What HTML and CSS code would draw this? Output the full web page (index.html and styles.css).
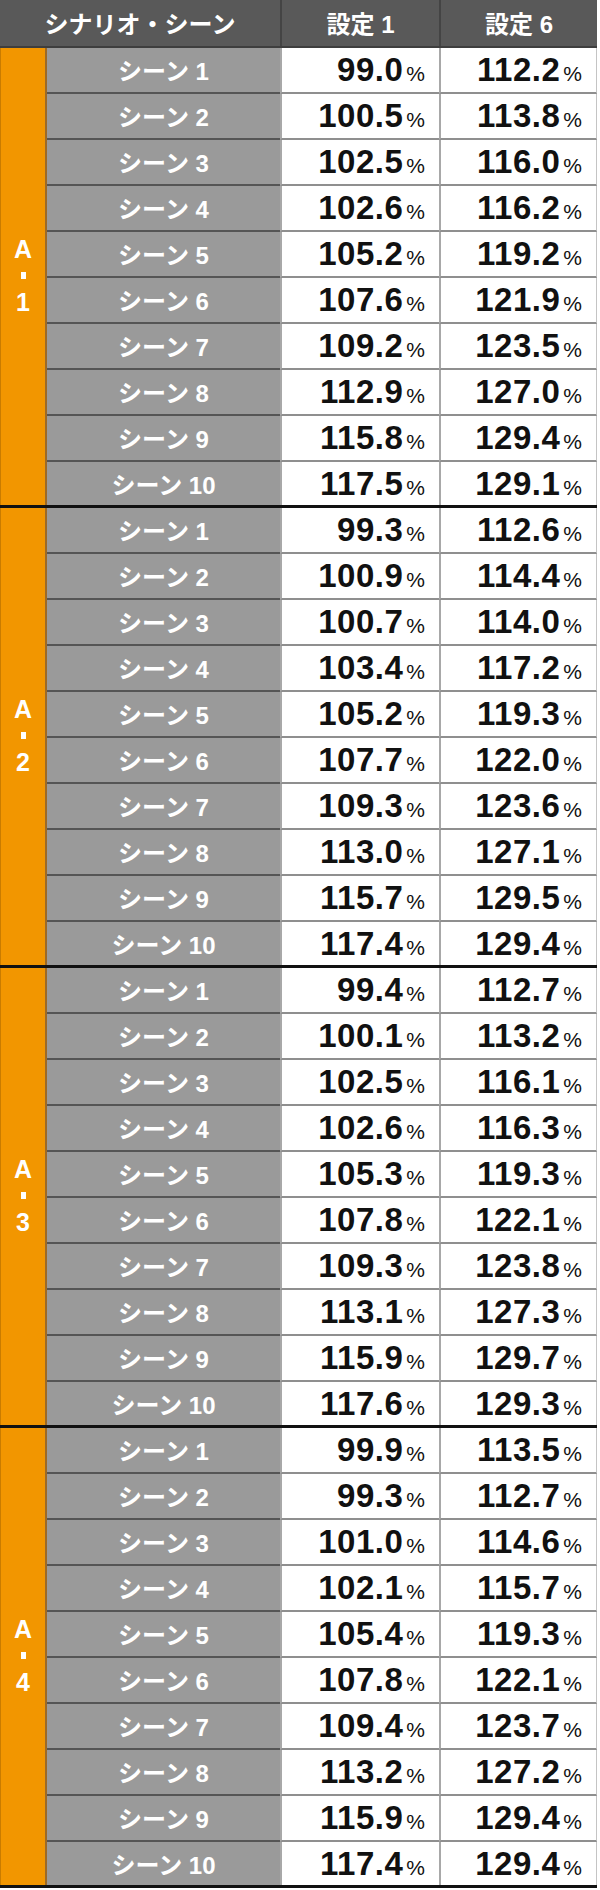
FILE: index.html
```html
<!DOCTYPE html>
<html lang="ja">
<head>
<meta charset="utf-8">
<title>シナリオ・シーン別 機械割</title>
<link rel="stylesheet" href="styles.css">
</head>
<body>
<div class="table">
  <div class="head">
    <div class="h-scene">シナリオ・シーン</div>
    <div class="h-val">設定 1</div>
    <div class="h-val">設定 6</div>
  </div>

  <div class="group">
    <div class="label"><span>A</span><span class="dash"></span><span>1</span></div>
    <div class="rows">
      <div class="row"><div class="scene">シーン 1</div><div class="val">99.0<span class="pct">%</span></div><div class="val">112.2<span class="pct">%</span></div></div>
      <div class="row"><div class="scene">シーン 2</div><div class="val">100.5<span class="pct">%</span></div><div class="val">113.8<span class="pct">%</span></div></div>
      <div class="row"><div class="scene">シーン 3</div><div class="val">102.5<span class="pct">%</span></div><div class="val">116.0<span class="pct">%</span></div></div>
      <div class="row"><div class="scene">シーン 4</div><div class="val">102.6<span class="pct">%</span></div><div class="val">116.2<span class="pct">%</span></div></div>
      <div class="row"><div class="scene">シーン 5</div><div class="val">105.2<span class="pct">%</span></div><div class="val">119.2<span class="pct">%</span></div></div>
      <div class="row"><div class="scene">シーン 6</div><div class="val">107.6<span class="pct">%</span></div><div class="val">121.9<span class="pct">%</span></div></div>
      <div class="row"><div class="scene">シーン 7</div><div class="val">109.2<span class="pct">%</span></div><div class="val">123.5<span class="pct">%</span></div></div>
      <div class="row"><div class="scene">シーン 8</div><div class="val">112.9<span class="pct">%</span></div><div class="val">127.0<span class="pct">%</span></div></div>
      <div class="row"><div class="scene">シーン 9</div><div class="val">115.8<span class="pct">%</span></div><div class="val">129.4<span class="pct">%</span></div></div>
      <div class="row"><div class="scene">シーン 10</div><div class="val">117.5<span class="pct">%</span></div><div class="val">129.1<span class="pct">%</span></div></div>
    </div>
  </div>

  <div class="group">
    <div class="label"><span>A</span><span class="dash"></span><span>2</span></div>
    <div class="rows">
      <div class="row"><div class="scene">シーン 1</div><div class="val">99.3<span class="pct">%</span></div><div class="val">112.6<span class="pct">%</span></div></div>
      <div class="row"><div class="scene">シーン 2</div><div class="val">100.9<span class="pct">%</span></div><div class="val">114.4<span class="pct">%</span></div></div>
      <div class="row"><div class="scene">シーン 3</div><div class="val">100.7<span class="pct">%</span></div><div class="val">114.0<span class="pct">%</span></div></div>
      <div class="row"><div class="scene">シーン 4</div><div class="val">103.4<span class="pct">%</span></div><div class="val">117.2<span class="pct">%</span></div></div>
      <div class="row"><div class="scene">シーン 5</div><div class="val">105.2<span class="pct">%</span></div><div class="val">119.3<span class="pct">%</span></div></div>
      <div class="row"><div class="scene">シーン 6</div><div class="val">107.7<span class="pct">%</span></div><div class="val">122.0<span class="pct">%</span></div></div>
      <div class="row"><div class="scene">シーン 7</div><div class="val">109.3<span class="pct">%</span></div><div class="val">123.6<span class="pct">%</span></div></div>
      <div class="row"><div class="scene">シーン 8</div><div class="val">113.0<span class="pct">%</span></div><div class="val">127.1<span class="pct">%</span></div></div>
      <div class="row"><div class="scene">シーン 9</div><div class="val">115.7<span class="pct">%</span></div><div class="val">129.5<span class="pct">%</span></div></div>
      <div class="row"><div class="scene">シーン 10</div><div class="val">117.4<span class="pct">%</span></div><div class="val">129.4<span class="pct">%</span></div></div>
    </div>
  </div>

  <div class="group">
    <div class="label"><span>A</span><span class="dash"></span><span>3</span></div>
    <div class="rows">
      <div class="row"><div class="scene">シーン 1</div><div class="val">99.4<span class="pct">%</span></div><div class="val">112.7<span class="pct">%</span></div></div>
      <div class="row"><div class="scene">シーン 2</div><div class="val">100.1<span class="pct">%</span></div><div class="val">113.2<span class="pct">%</span></div></div>
      <div class="row"><div class="scene">シーン 3</div><div class="val">102.5<span class="pct">%</span></div><div class="val">116.1<span class="pct">%</span></div></div>
      <div class="row"><div class="scene">シーン 4</div><div class="val">102.6<span class="pct">%</span></div><div class="val">116.3<span class="pct">%</span></div></div>
      <div class="row"><div class="scene">シーン 5</div><div class="val">105.3<span class="pct">%</span></div><div class="val">119.3<span class="pct">%</span></div></div>
      <div class="row"><div class="scene">シーン 6</div><div class="val">107.8<span class="pct">%</span></div><div class="val">122.1<span class="pct">%</span></div></div>
      <div class="row"><div class="scene">シーン 7</div><div class="val">109.3<span class="pct">%</span></div><div class="val">123.8<span class="pct">%</span></div></div>
      <div class="row"><div class="scene">シーン 8</div><div class="val">113.1<span class="pct">%</span></div><div class="val">127.3<span class="pct">%</span></div></div>
      <div class="row"><div class="scene">シーン 9</div><div class="val">115.9<span class="pct">%</span></div><div class="val">129.7<span class="pct">%</span></div></div>
      <div class="row"><div class="scene">シーン 10</div><div class="val">117.6<span class="pct">%</span></div><div class="val">129.3<span class="pct">%</span></div></div>
    </div>
  </div>

  <div class="group">
    <div class="label"><span>A</span><span class="dash"></span><span>4</span></div>
    <div class="rows">
      <div class="row"><div class="scene">シーン 1</div><div class="val">99.9<span class="pct">%</span></div><div class="val">113.5<span class="pct">%</span></div></div>
      <div class="row"><div class="scene">シーン 2</div><div class="val">99.3<span class="pct">%</span></div><div class="val">112.7<span class="pct">%</span></div></div>
      <div class="row"><div class="scene">シーン 3</div><div class="val">101.0<span class="pct">%</span></div><div class="val">114.6<span class="pct">%</span></div></div>
      <div class="row"><div class="scene">シーン 4</div><div class="val">102.1<span class="pct">%</span></div><div class="val">115.7<span class="pct">%</span></div></div>
      <div class="row"><div class="scene">シーン 5</div><div class="val">105.4<span class="pct">%</span></div><div class="val">119.3<span class="pct">%</span></div></div>
      <div class="row"><div class="scene">シーン 6</div><div class="val">107.8<span class="pct">%</span></div><div class="val">122.1<span class="pct">%</span></div></div>
      <div class="row"><div class="scene">シーン 7</div><div class="val">109.4<span class="pct">%</span></div><div class="val">123.7<span class="pct">%</span></div></div>
      <div class="row"><div class="scene">シーン 8</div><div class="val">113.2<span class="pct">%</span></div><div class="val">127.2<span class="pct">%</span></div></div>
      <div class="row"><div class="scene">シーン 9</div><div class="val">115.9<span class="pct">%</span></div><div class="val">129.4<span class="pct">%</span></div></div>
      <div class="row"><div class="scene">シーン 10</div><div class="val">117.4<span class="pct">%</span></div><div class="val">129.4<span class="pct">%</span></div></div>
    </div>
  </div>
</div>
</body>
</html>
```

FILE: styles.css
```css
* { box-sizing: border-box; }

html, body {
  margin: 0;
  padding: 0;
  background: #ffffff;
}

body {
  font-family: "Liberation Sans", "Noto Sans CJK JP", sans-serif;
  font-weight: bold;
}

.table {
  width: 597px;
}

.head {
  display: grid;
  grid-template-columns: 280px 159px 158px;
  height: 48px;
  background: #595959;
  border-bottom: 2px solid #3e3e3e;
  color: #ffffff;
  font-size: 24px;
}

.h-scene,
.h-val {
  display: flex;
  align-items: center;
  justify-content: center;
  padding-bottom: 2px;
}

.h-val {
  border-left: 2px solid #444444;
}

.group {
  display: flex;
  border-bottom: 3px solid #111111;
}

.label {
  width: 47px;
  flex: none;
  background: #f29600;
  border-left: 1px solid #c97c00;
  border-right: 2px solid #9b6a28;
  display: flex;
  flex-direction: column;
  align-items: center;
  justify-content: center;
  color: #ffffff;
  font-family: "Liberation Sans", sans-serif;
  font-size: 25px;
  line-height: 26px;
  padding-bottom: 2px;
}

.dash {
  width: 5px;
  height: 7px;
  background: #ffffff;
  margin: 10px 0 10px;
}

.rows {
  flex: 1;
  display: flex;
  flex-direction: column;
}

.row {
  display: grid;
  grid-template-columns: 233px 159px 158px;
  height: 46px;
}

.row:last-child {
  height: 43px;
}

.scene {
  background: #9a9a9a;
  color: #ffffff;
  font-size: 24px;
  display: flex;
  align-items: center;
  justify-content: center;
  border-bottom: 2px solid #555555;
  padding-bottom: 1px;
}

.val {
  background: #ffffff;
  color: #111111;
  font-size: 33px;
  letter-spacing: 0.5px;
  display: flex;
  align-items: center;
  justify-content: flex-end;
  padding-right: 14px;
  border-bottom: 2px solid #8f8f8f;
  border-left: 2px solid #a8a8a8;
}

.val:last-child {
  border-right: 1px solid #c4c4c4;
}

.row:last-child .scene,
.row:last-child .val {
  border-bottom: none;
}

.pct {
  font-size: 21px;
  font-weight: normal;
  letter-spacing: 0;
  margin-left: 3px;
  margin-top: 8px;
}
```
